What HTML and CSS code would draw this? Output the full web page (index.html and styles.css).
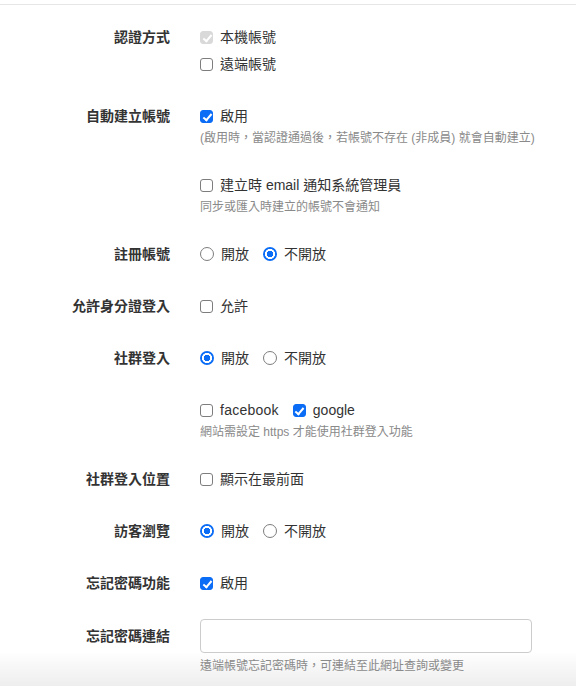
FILE: index.html
```html
<!DOCTYPE html>
<html lang="zh-Hant">
<head>
<meta charset="utf-8">
<title>帳號設定</title>
<link rel="stylesheet" href="styles.css">
</head>
<body>
<div class="page">
  <form class="form">
    <div class="group">
      <div class="label">認證方式</div>
      <div class="controls">
        <div class="line"><span class="check disabled checked"></span><span class="opt">本機帳號</span></div>
        <div class="line"><span class="check"></span><span class="opt">遠端帳號</span></div>
      </div>
    </div>

    <div class="group has-help">
      <div class="label">自動建立帳號</div>
      <div class="controls">
        <div class="line"><span class="check checked"></span><span class="opt">啟用</span></div>
        <div class="help">(啟用時，當認證通過後，若帳號不存在 (非成員) 就會自動建立)</div>
      </div>
    </div>

    <div class="group has-help">
      <div class="label"></div>
      <div class="controls">
        <div class="line"><span class="check"></span><span class="opt">建立時 email 通知系統管理員</span></div>
        <div class="help">同步或匯入時建立的帳號不會通知</div>
      </div>
    </div>

    <div class="group">
      <div class="label">註冊帳號</div>
      <div class="controls">
        <div class="line">
          <span class="radio"></span><span class="opt">開放</span>
          <span class="radio checked"></span><span class="opt">不開放</span>
        </div>
      </div>
    </div>

    <div class="group">
      <div class="label">允許身分證登入</div>
      <div class="controls">
        <div class="line"><span class="check"></span><span class="opt">允許</span></div>
      </div>
    </div>

    <div class="group">
      <div class="label">社群登入</div>
      <div class="controls">
        <div class="line">
          <span class="radio checked"></span><span class="opt">開放</span>
          <span class="radio"></span><span class="opt">不開放</span>
        </div>
      </div>
    </div>

    <div class="group has-help">
      <div class="label"></div>
      <div class="controls">
        <div class="line">
          <span class="check"></span><span class="opt opt-wide">facebook</span>
          <span class="check checked"></span><span class="opt">google</span>
        </div>
        <div class="help">網站需設定 https 才能使用社群登入功能</div>
      </div>
    </div>

    <div class="group">
      <div class="label">社群登入位置</div>
      <div class="controls">
        <div class="line"><span class="check"></span><span class="opt">顯示在最前面</span></div>
      </div>
    </div>

    <div class="group">
      <div class="label">訪客瀏覽</div>
      <div class="controls">
        <div class="line">
          <span class="radio checked"></span><span class="opt">開放</span>
          <span class="radio"></span><span class="opt">不開放</span>
        </div>
      </div>
    </div>

    <div class="group">
      <div class="label">忘記密碼功能</div>
      <div class="controls">
        <div class="line"><span class="check checked"></span><span class="opt">啟用</span></div>
      </div>
    </div>

    <div class="group input-group">
      <div class="label label-input">忘記密碼連結</div>
      <div class="controls">
        <input class="text" type="text">
        <div class="help">遠端帳號忘記密碼時，可連結至此網址查詢或變更</div>
      </div>
    </div>
  </form>
</div>
</body>
</html>
```

FILE: styles.css
```css
html, body {
  margin: 0;
  padding: 0;
}
body {
  min-height: 686px;
  background: linear-gradient(to bottom, #ffffff 0, #ffffff 652px, #eeeeee 686px);
  font-family: "Noto Sans CJK TC", "Liberation Sans", sans-serif;
  color: #333333;
}
.page {
  padding-top: 4px;
}
.form {
  border-top: 1px solid #e6e6e6;
  padding-top: 22px;
}
.group {
  display: flex;
  margin-bottom: 32px;
}
.group.has-help {
  margin-bottom: 28px;
}
.label {
  width: 170px;
  flex: none;
  margin-top: -1px;
  text-align: right;
  font-size: 14px;
  font-weight: 700;
  line-height: 20px;
  color: #333333;
}
.controls {
  margin-left: 30px;
  display: flex;
  flex-direction: column;
  gap: 7px;
}
.line {
  display: flex;
  align-items: center;
  height: 20px;
  font-size: 14px;
  line-height: 20px;
}
.opt {
  margin-left: 7px;
  margin-right: 14px;
  font-family: "Liberation Sans", "Noto Sans CJK TC", sans-serif;
  color: #333333;
}
.opt-wide {
  letter-spacing: 0.25px;
}
.check {
  box-sizing: border-box;
  width: 13px;
  height: 13px;
  border: 1px solid #7d7d7d;
  border-radius: 3px;
  background: #ffffff;
  display: inline-block;
  position: relative;
  flex: none;
}
.check.checked {
  background: #0b6cf5;
  border-color: #0b6cf5;
}
.check.disabled.checked {
  background: #d9d9d9;
  border-color: #d9d9d9;
}
.check.checked::after {
  content: "";
  position: absolute;
  left: 3.5px;
  top: 1px;
  width: 3px;
  height: 7px;
  border: solid #ffffff;
  border-width: 0 2px 2px 0;
  transform: rotate(40deg);
}
.radio {
  box-sizing: border-box;
  width: 14px;
  height: 14px;
  border: 1px solid #7d7d7d;
  border-radius: 50%;
  background: #ffffff;
  display: inline-block;
  flex: none;
}
.radio.checked {
  border: none;
  background: radial-gradient(circle, #0b6cf5 0, #0b6cf5 3px, #ffffff 3.5px, #ffffff 4.8px, #0b6cf5 5.3px);
}
.help {
  margin-top: -4px;
  font-size: 12px;
  line-height: 18px;
  color: #8a8a8a;
  font-family: "Liberation Sans", "Noto Sans CJK TC", sans-serif;
}
.input-group {
  margin-top: -6px;
  margin-bottom: 0;
}
.label-input {
  line-height: 34px;
}
.input-group .controls {
  gap: 6px;
}
.input-group .help {
  margin-top: -2px;
}
.text {
  box-sizing: border-box;
  width: 332px;
  height: 34px;
  border: 1px solid #cccccc;
  border-radius: 4px;
  background: #ffffff;
  margin: 0;
  padding: 6px 10px;
  font-size: 14px;
}
```
